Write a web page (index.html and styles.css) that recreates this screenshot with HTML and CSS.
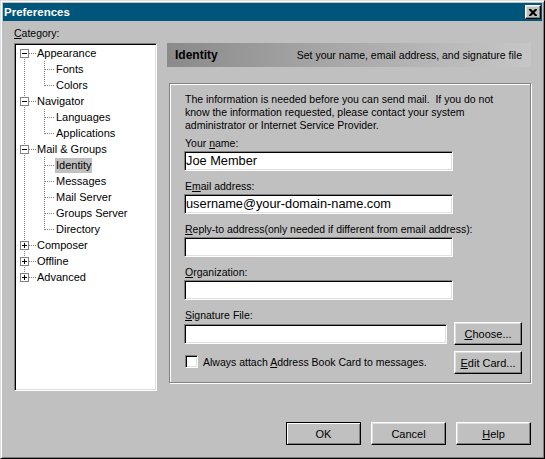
FILE: index.html
```html
<!DOCTYPE html>
<html>
<head>
<meta charset="utf-8">
<title>Preferences</title>
<link rel="stylesheet" href="styles.css">
</head>
<body>
<div class="window">
  <div class="titlebar">
    <span class="title">Preferences</span>
    <span class="close">
      <svg width="8" height="7" viewBox="0 0 8 7"><path d="M0 0h2l2 2 2-2h2v1l-2.5 2.5L8 6v1H6L4 5 2 7H0V6l2.5-2.5L0 1z" fill="#000"/></svg>
    </span>
  </div>
  <div class="body">
    <div class="main">
      <div class="cat-label"><u>C</u>ategory:</div>
      <div class="tree">
        <div class="row"><span class="c first"><svg class="exp" width="9" height="9"><rect x="0.5" y="0.5" width="8" height="8" fill="#fff" stroke="#808080"/><path d="M2 4.5h5" stroke="#000"/></svg></span><span class="lbl">Appearance</span></div>
        <div class="row"><span class="c pass"></span><span class="c2 tee"></span><span class="lbl">Fonts</span></div>
        <div class="row"><span class="c pass"></span><span class="c2 end"></span><span class="lbl">Colors</span></div>
        <div class="row"><span class="c mid"><svg class="exp" width="9" height="9"><rect x="0.5" y="0.5" width="8" height="8" fill="#fff" stroke="#808080"/><path d="M2 4.5h5" stroke="#000"/></svg></span><span class="lbl">Navigator</span></div>
        <div class="row"><span class="c pass"></span><span class="c2 tee"></span><span class="lbl">Languages</span></div>
        <div class="row"><span class="c pass"></span><span class="c2 end"></span><span class="lbl">Applications</span></div>
        <div class="row"><span class="c mid"><svg class="exp" width="9" height="9"><rect x="0.5" y="0.5" width="8" height="8" fill="#fff" stroke="#808080"/><path d="M2 4.5h5" stroke="#000"/></svg></span><span class="lbl">Mail &amp; Groups</span></div>
        <div class="row"><span class="c pass"></span><span class="c2 tee"></span><span class="lbl sel">Identity</span></div>
        <div class="row"><span class="c pass"></span><span class="c2 tee"></span><span class="lbl">Messages</span></div>
        <div class="row"><span class="c pass"></span><span class="c2 tee"></span><span class="lbl">Mail Server</span></div>
        <div class="row"><span class="c pass"></span><span class="c2 tee"></span><span class="lbl">Groups Server</span></div>
        <div class="row"><span class="c pass"></span><span class="c2 end"></span><span class="lbl">Directory</span></div>
        <div class="row"><span class="c mid"><svg class="exp" width="9" height="9"><rect x="0.5" y="0.5" width="8" height="8" fill="#fff" stroke="#808080"/><path d="M2 4.5h5M4.5 2v5" stroke="#000"/></svg></span><span class="lbl">Composer</span></div>
        <div class="row"><span class="c mid"><svg class="exp" width="9" height="9"><rect x="0.5" y="0.5" width="8" height="8" fill="#fff" stroke="#808080"/><path d="M2 4.5h5M4.5 2v5" stroke="#000"/></svg></span><span class="lbl">Offline</span></div>
        <div class="row"><span class="c last"><svg class="exp" width="9" height="9"><rect x="0.5" y="0.5" width="8" height="8" fill="#fff" stroke="#808080"/><path d="M2 4.5h5M4.5 2v5" stroke="#000"/></svg></span><span class="lbl">Advanced</span></div>
      </div>
      <div class="right">
        <div class="banner">
          <span class="banner-title">Identity</span>
          <span class="banner-desc">Set your name, email address, and signature file</span>
        </div>
        <div class="group">
          <p class="intro">The information is needed before you can send mail.&nbsp; If you do not know the information requested, please contact your system administrator or Internet Service Provider.</p>
          <div class="field">
            <div class="flabel">Your <u>n</u>ame:</div>
            <div class="input">Joe Member</div>
          </div>
          <div class="field">
            <div class="flabel">E<u>m</u>ail address:</div>
            <div class="input">username@your-domain-name.com</div>
          </div>
          <div class="field">
            <div class="flabel"><u>R</u>eply-to address(only needed if different from email address):</div>
            <div class="input"></div>
          </div>
          <div class="field">
            <div class="flabel"><u>O</u>rganization:</div>
            <div class="input"></div>
          </div>
          <div class="field sig">
            <div class="flabel"><u>S</u>ignature File:</div>
            <div class="sigrow">
              <div class="input short"></div>
              <span class="btn small"><span><u>C</u>hoose...</span></span>
            </div>
          </div>
          <div class="checkrow">
            <span class="check"><span class="box"></span><span class="check-text">Always attach <u>A</u>ddress Book Card to messages.</span></span>
            <span class="btn small"><span><u>E</u>dit Card...</span></span>
          </div>
        </div>
      </div>
    </div>
    <div class="footer">
      <span class="btn big default">OK</span>
      <span class="btn big">Cancel</span>
      <span class="btn big"><span><u>H</u>elp</span></span>
    </div>
  </div>
</div>
</body>
</html>
```

FILE: styles.css
```css
html, body {
  margin: 0;
  padding: 0;
  background: #c0c0c0;
}

body {
  font-family: "Liberation Sans", Arial, sans-serif;
  font-size: 10.5px;
  color: #000;
}

.window {
  --vd: repeating-linear-gradient(to bottom, #808080 0 1px, transparent 1px 2px);
  --hd: repeating-linear-gradient(to right, #808080 0 1px, transparent 1px 2px);
  width: 545px;
  height: 459px;
  box-sizing: border-box;
  background: #c0c0c0;
  border: 1px solid;
  border-color: #dfdfdf #000 #000 #dfdfdf;
  box-shadow: inset 1px 1px #fff, inset -1px -1px #808080;
  padding: 2px;
  display: flex;
  flex-direction: column;
}

.titlebar {
  height: 18px;
  flex: none;
  background: #00557b;
  color: #fff;
  display: flex;
  align-items: center;
  justify-content: space-between;
  padding: 0 1px 0 1px;
}

.title {
  font-weight: bold;
  font-size: 11.5px;
}

.close {
  width: 16px;
  height: 14px;
  box-sizing: border-box;
  background: #c0c0c0;
  border: 1px solid;
  border-color: #fff #000 #000 #fff;
  box-shadow: inset -1px -1px #808080, inset 1px 1px #dfdfdf;
  display: flex;
  align-items: center;
  justify-content: center;
  padding-right: 1px;
}

.body {
  flex: 1;
  padding: 4px 11px 0 11px;
  display: flex;
  flex-direction: column;
}

.main {
  display: grid;
  grid-template-columns: 143px 1fr;
  grid-template-rows: 18px 348px;
  column-gap: 10px;
}

.cat-label {
  grid-column: 1;
  grid-row: 1;
  padding-top: 2px;
  line-height: 13px;
}

.tree {
  grid-column: 1;
  grid-row: 2;
  box-sizing: border-box;
  background: #fff;
  border: 1px solid;
  border-color: #808080 #fff #fff #808080;
  box-shadow: inset 1px 1px #000, inset -1px -1px #dfdfdf;
  padding: 1px 1px;
}

.row {
  height: 16px;
  display: flex;
  align-items: center;
}

.c {
  width: 20px;
  height: 16px;
  flex: none;
  display: flex;
  align-items: center;
}

.c2 {
  width: 19px;
  height: 16px;
  flex: none;
}

.exp {
  margin-left: 4px;
  display: block;
}

.c.first {
  background:
    var(--hd) 13px 8px / 7px 1px no-repeat,
    var(--vd) 8px 8px / 1px 8px no-repeat;
}

.c.mid {
  background:
    var(--hd) 13px 8px / 7px 1px no-repeat,
    var(--vd) 8px 0 / 1px 16px no-repeat;
}

.c.last {
  background:
    var(--hd) 13px 8px / 7px 1px no-repeat,
    var(--vd) 8px 0 / 1px 8px no-repeat;
}

.c.pass {
  background: var(--vd) 8px 0 / 1px 16px no-repeat;
}

.c2.tee {
  background:
    var(--hd) 9px 8px / 10px 1px no-repeat,
    var(--vd) 8px 0 / 1px 16px no-repeat;
}

.c2.end {
  background:
    var(--hd) 9px 8px / 10px 1px no-repeat,
    var(--vd) 8px 0 / 1px 9px no-repeat;
}

.lbl {
  padding: 1px 1px;
  line-height: 13px;
  white-space: nowrap;
  font-size: 11px;
}

.lbl.sel {
  background: #c0c0c0;
}

.right {
  grid-column: 2;
  grid-row: 2;
  display: flex;
  flex-direction: column;
}

.banner {
  height: 24px;
  flex: none;
  background: linear-gradient(to right, #8a8a8a 0%, #a4a4a4 40%, #c6c6c6 100%);
  display: flex;
  align-items: center;
  justify-content: space-between;
  padding: 0 9px 0 8px;
}

.banner-title {
  font-weight: bold;
  font-size: 12px;
}

.group {
  margin: 16px 0 0 2px;
  height: 300px;
  box-sizing: border-box;
  border: 1px solid #808080;
  box-shadow: inset 1px 1px #fff, 1px 1px #fff;
  padding: 9px 0 0 14px;
}

.intro {
  margin: 0;
  width: 330px;
  line-height: 13px;
  padding-left: 1px;
}

.field {
  margin-top: 5px;
}

.field + .field {
  margin-top: 9px;
}

.flabel {
  line-height: 13px;
  margin-bottom: 1px;
  padding-left: 1px;
}

.input {
  width: 269px;
  height: 20px;
  box-sizing: border-box;
  background: #fff;
  border: 1px solid;
  border-color: #808080 #fff #fff #808080;
  box-shadow: inset 1px 1px #000, inset -1px -1px #dfdfdf;
  font-size: 12.8px;
  line-height: 18px;
  padding-left: 1px;
  white-space: nowrap;
}

.input.short {
  width: 263px;
}

.sigrow {
  display: flex;
  align-items: center;
  gap: 7px;
  margin-top: -1px;
}

.btn {
  box-sizing: border-box;
  background: #c0c0c0;
  border: 1px solid;
  border-color: #fff #000 #000 #fff;
  box-shadow: inset -1px -1px #808080, inset 1px 1px #dfdfdf;
  display: flex;
  align-items: center;
  justify-content: center;
  font-size: 11px;
}

.btn.small {
  width: 68px;
  height: 23px;
}

.btn.big {
  width: 75px;
  height: 23px;
}

.btn.default {
  border-color: #000;
  box-shadow: inset 1px 1px #fff, inset -1px -1px #808080;
}

.checkrow {
  width: 338px;
  margin-top: 6px;
  display: flex;
  align-items: center;
  justify-content: space-between;
}

.check {
  display: flex;
  align-items: center;
  gap: 5px;
  padding-left: 1px;
  margin-top: -2px;
}

.check-text {
  font-size: 10.5px;
}

.box {
  width: 13px;
  height: 13px;
  box-sizing: border-box;
  background: #fff;
  border: 1px solid;
  border-color: #808080 #fff #fff #808080;
  box-shadow: inset 1px 1px #000, inset -1px -1px #dfdfdf;
}

.footer {
  display: flex;
  justify-content: flex-end;
  gap: 10px;
  padding-top: 31px;
}
```
